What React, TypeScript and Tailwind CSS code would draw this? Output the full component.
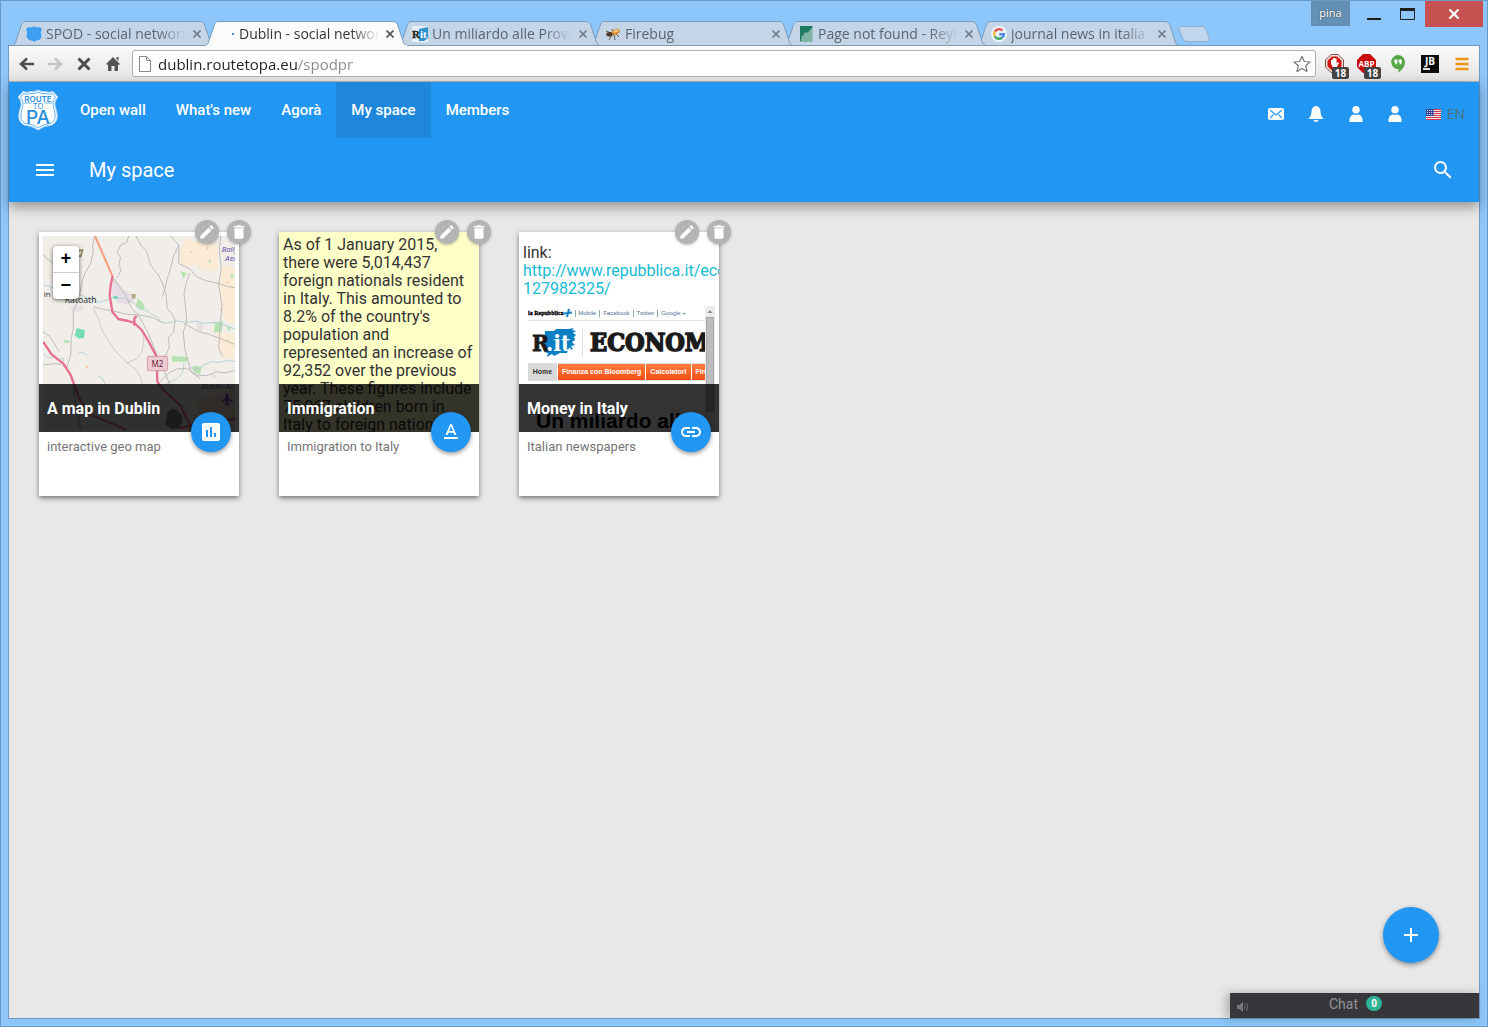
import { ReactNode } from "react";
import {
  MdAdd,
  MdAssessment,
  MdDelete,
  MdEdit,
  MdLink,
  MdMenu,
  MdSearch,
  MdTextFormat,
} from "react-icons/md";

/* ---------- Tab strip ---------- */

function ShieldFavicon() {
  return (
    <svg viewBox="0 0 16 16" className="size-4" aria-hidden="true">
      <path
        d="M2 1 Q5 2 8 .5 Q11 2 14 1 L16 3.5 Q14 6 15.3 9 Q16 13 12 14.3 Q9.5 14.5 8 16 Q6.5 14.5 4 14.3 Q0 13 .7 9 Q2 6 0 3.5Z"
        fill="#3f9ff3"
      />
    </svg>
  );
}

function LoadingFavicon() {
  return (
    <svg viewBox="0 0 16 16" className="size-4" aria-hidden="true">
      <rect x="13" y="7" width="2" height="2" fill="#4a84e8" />
    </svg>
  );
}

function RitFavicon() {
  return (
    <svg viewBox="0 0 16 16" className="size-4" aria-hidden="true">
      <rect width="16" height="16" fill="#e6eef6" />
      <path d="M7 3 L16 1 V12 L12 15 H7Z" fill="#2f93d0" />
      <g fontSize="11" fontWeight="700" fontFamily="Liberation Serif, serif">
        <text x="0" y="12" fill="#222" stroke="#222" strokeWidth=".4">R</text>
        <text x="8" y="12" fill="#fff">it</text>
      </g>
    </svg>
  );
}

function BugFavicon() {
  return (
    <svg viewBox="0 0 16 16" className="size-4" aria-hidden="true">
      <path d="M1 5 L6 7 M1 9 L6 8 M4 14 L7 9 M10 14 L9 8 M14 11 L10 7 M7 3 L8 6" stroke="#6b5c48" fill="none" />
      <ellipse cx="10.5" cy="6" rx="4.6" ry="2.7" transform="rotate(-22 10.5 6)" fill="#dc8f32" />
      <ellipse cx="11" cy="5" rx="3" ry="1" transform="rotate(-22 11 5)" fill="#f5cf8e" />
      <ellipse cx="4.5" cy="8.2" rx="3" ry="2.3" fill="#51382a" />
    </svg>
  );
}

function GreenFavicon() {
  return (
    <svg viewBox="0 0 16 16" className="size-4" aria-hidden="true">
      <rect x="2" width="12.5" height="16" fill="#7fb3a4" />
      <path d="M2 0 H14.5 V1 L12 4 L9 7 L7 6 L5 10 L4 9 L3 15 H2Z" fill="#1d7c60" />
    </svg>
  );
}

function GoogleFavicon() {
  return (
    <svg viewBox="0 0 16 16" className="size-4" aria-hidden="true">
      <circle cx="8" cy="8" r="8" fill="#edf3fa" />
      <g fill="none" strokeWidth="2.4">
        <path d="M11.500 4.600 A4.900 4.900 0 0 0 3.800 5.600" stroke="#e0584c" />
        <path d="M3.800 5.600 A4.900 4.900 0 0 0 3.800 10.400" stroke="#f2bd42" />
        <path d="M3.800 10.400 A4.900 4.900 0 0 0 11 11.800" stroke="#45a866" />
        <path d="M11 11.800 A4.900 4.900 0 0 0 12.900 8.200 H8.200" stroke="#5488e8" />
      </g>
    </svg>
  );
}

type Tab = { title: string; icon: ReactNode; layer: string; active?: boolean };

const tabs: Tab[] = [
  { title: "SPOD - social network", icon: <ShieldFavicon />, layer: "z-[6]" },
  { title: "Dublin - social network", icon: <LoadingFavicon />, layer: "z-10", active: true },
  { title: "Un miliardo alle Province", icon: <RitFavicon />, layer: "z-[5]" },
  { title: "Firebug", icon: <BugFavicon />, layer: "z-[4]" },
  { title: "Page not found - Reyk", icon: <GreenFavicon />, layer: "z-[3]" },
  { title: "journal news in italia", icon: <GoogleFavicon />, layer: "z-[2]" },
];

function BrowserTab({ tab }: { tab: Tab }) {
  return (
    <div className={`relative -ml-[10px] h-[25px] w-[203px] shrink-0 ${tab.layer}`}>
      <svg viewBox="0 0 203 25" className="absolute inset-0 size-full" aria-hidden="true">
        <path
          d="M0 24.5 C2 24.5 3 23 4 20 L9 5 C10 1.5 11 .5 14 .5 H187 C190 .5 192 1.5 193 5 L198 20 C199 23 200 24.5 203 24.5"
          fill={tab.active ? "#fbfbfb" : "#c4d5e8"}
          stroke="#7c9cbd"
        />
        {tab.active ? (
          <path d="M1 24.5 H202" stroke="#fbfbfb" />
        ) : (
          <path d="M0 24.5 H203" stroke="#8599b0" />
        )}
      </svg>
      <div className="relative flex h-full items-center pl-[14px]">
        {tab.icon}
        <span
          className={`ml-1 w-[140px] overflow-hidden whitespace-nowrap text-[14px] leading-6 [mask-image:linear-gradient(to_right,#000_112px,transparent_140px)] ${
            tab.active ? "text-[#333]" : "text-[#5a6573]"
          }`}
        >
          {tab.title}
        </span>
        <button aria-label={`Close ${tab.title}`} className="ml-[5px] flex size-3 items-center justify-center">
          <svg viewBox="0 0 8 8" className="size-2" aria-hidden="true">
            <path d="M.5 .5 L7.5 7.5 M7.5 .5 L.5 7.5" stroke={tab.active ? "#555" : "#74808e"} strokeWidth="1.7" />
          </svg>
        </button>
      </div>
    </div>
  );
}

function TitleBar() {
  return (
    <header className="flex h-11 justify-between">
      <div className="-mb-px flex items-end self-end pl-[14px]">
        {tabs.map((t) => (
          <BrowserTab key={t.title} tab={t} />
        ))}
        <button aria-label="New tab" className="mb-1 -ml-0.5 shrink-0">
          <svg viewBox="0 0 32 16" className="h-4 w-8" aria-hidden="true">
            <path d="M3 .5 H24 Q27 .5 28 3 L31 12 Q32 15.5 29 15.5 H9 Q6 15.5 5 13 L1 3 Q.3 .5 3 .5Z" fill="#c1d6ec" stroke="#8fb0d0" />
          </svg>
        </button>
      </div>
      <div className="-mr-[3px] flex items-start">
        <span className="flex h-[25px] w-[39px] items-center justify-center bg-[#6590b6] text-[11px] text-white [text-shadow:0_0_2px_#333]">
          pina
        </span>
        <button aria-label="Minimize" className="ml-4 flex h-[26px] w-4 items-center justify-center">
          <svg viewBox="0 0 16 26" className="h-[26px] w-4" aria-hidden="true">
            <path d="M1 18 H15" stroke="#1e1e1e" strokeWidth="2" />
          </svg>
        </button>
        <button aria-label="Maximize" className="ml-4 flex h-[26px] w-5 items-center justify-center">
          <svg viewBox="0 0 20 26" className="h-[26px] w-5" aria-hidden="true">
            <path d="M2.5 8 V18.5 H16.5 V8" fill="none" stroke="#1e1e1e" />
            <path d="M2 8.5 H17" stroke="#1e1e1e" strokeWidth="3" />
          </svg>
        </button>
        <button aria-label="Close window" className="ml-[7px] flex h-[26px] w-[58px] items-center justify-center bg-[#c75050]">
          <svg viewBox="0 0 12 10" className="h-2.5 w-3" aria-hidden="true">
            <path d="M1.5 .5 L10.5 9.5 M10.5 .5 L1.5 9.5" stroke="#fff" strokeWidth="2.2" />
          </svg>
        </button>
      </div>
    </header>
  );
}

/* ---------- Browser toolbar ---------- */

function CountBadge() {
  return (
    <>
      <rect x="7" y="13" width="17" height="12" rx="2" fill="#444" />
      <text x="15.5" y="23" textAnchor="middle" fontSize="10" fontWeight="700" fontFamily="Open Sans, sans-serif" fill="#fff">
        18
      </text>
    </>
  );
}

function BrowserToolbar() {
  return (
    <div className="flex h-9 items-center border-b border-[#b4b4b4] bg-linear-to-b from-[#fbfbfb] to-[#e4e4e4] pr-2.5 pl-2">
      <button aria-label="Back" className="flex size-5 items-center justify-center">
        <svg viewBox="0 0 16 14" className="h-3.5 w-4" aria-hidden="true">
          <path d="M15 7 H2 M8 1.5 L2 7 L8 12.5" fill="none" stroke="#4c4c4c" strokeWidth="2.5" />
        </svg>
      </button>
      <button aria-label="Forward" className="ml-2 flex size-5 items-center justify-center">
        <svg viewBox="0 0 16 14" className="h-3.5 w-4" aria-hidden="true">
          <path d="M1 7 H14 M8 1.5 L14 7 L8 12.5" fill="none" stroke="#c5c5c5" strokeWidth="2.5" />
        </svg>
      </button>
      <button aria-label="Stop" className="ml-[9px] flex size-5 items-center justify-center">
        <svg viewBox="0 0 14 14" className="size-3.5" aria-hidden="true">
          <path d="M1.5 1.5 L12.5 12.5 M12.5 1.5 L1.5 12.5" stroke="#4c4c4c" strokeWidth="3" />
        </svg>
      </button>
      <button aria-label="Home" className="ml-[9px] flex size-5 items-center justify-center">
        <svg viewBox="0 0 14 16" className="h-4 w-3.5" aria-hidden="true">
          <path d="M7 1 L14 8 L13 9 L12 8.3 V15 H8.5 V10 H5.5 V15 H2 V8.3 L1 9 L0 8Z M10.5 1 H12.5 V5 L10.5 3Z" fill="#555" />
        </svg>
      </button>
      <div className="ml-[9px] flex h-[27px] min-w-0 flex-1 items-center rounded-[3px] border border-[#b0b0b0] bg-white px-1">
        <svg viewBox="0 0 12 16" className="ml-0.5 h-4 w-3 shrink-0" aria-hidden="true">
          <path d="M.5 .5 H7.5 L11.5 4.5 V15.5 H.5Z M7.5 .5 V4.5 H11.5" fill="#fff" stroke="#868686" />
        </svg>
        <input
          aria-label="Address"
          defaultValue="dublin.routetopa.eu/spodpr"
          className="ml-[7px] min-w-0 flex-1 bg-[linear-gradient(to_right,#222_139px,#888_139px)] bg-clip-text text-[15px] leading-6 text-transparent outline-none"
        />
        <button aria-label="Bookmark">
          <svg viewBox="0 0 18 18" className="size-[18px]" aria-hidden="true">
            <path d="M9 1.2 L11.3 6.5 L17 7 L12.7 10.8 L14 16.5 L9 13.5 L4 16.5 L5.3 10.8 L1 7 L6.7 6.5Z" fill="#fff" stroke="#777" strokeWidth="1.2" strokeLinejoin="round" />
          </svg>
        </button>
      </div>
      <div className="ml-[9px] flex shrink-0 items-center">
        <button aria-label="Hand blocker, 18 blocked">
          <svg viewBox="0 -6 24 32" className="h-8 w-6" aria-hidden="true">
            <path d="M6 .5 H13 L18.5 6 V13 L13 18.5 H6 L.5 13 V6Z" fill="#e9e4e2" stroke="#8a4b47" />
            <path d="M6.8 2.5 H12.2 L16.5 6.8 V12.2 L12.2 16.5 H6.8 L2.5 12.2 V6.8Z" fill="#d2140e" />
            <path d="M6 10 V6 H7.3 V9 V4.500 H8.700 V8.500 V4 H10.200 V8.500 V4.500 H11.600 V9.500 L13 8 L14 9 L11.500 13.500 H8 Z" fill="#fff" />
            <CountBadge />
          </svg>
        </button>
        <button aria-label="Ad blocker, 18 blocked" className="ml-2">
          <svg viewBox="0 -6 24 32" className="h-8 w-6" aria-hidden="true">
            <path d="M6 0 H13 L19 6 V13 L13 19 H6 L0 13 V6Z" fill="#c90a0a" />
            <text x="9.5" y="13" textAnchor="middle" fontSize="8" fontWeight="700" fontFamily="Open Sans, sans-serif" fill="#fff">
              ABP
            </text>
            <CountBadge />
          </svg>
        </button>
        <button aria-label="Hangouts" className="ml-2.5">
          <svg viewBox="0 0 14 18" className="h-[18px] w-3.5" aria-hidden="true">
            <path d="M7 0 A7 7 0 0 1 14 7 C14 11 11 15 7.5 17.5 V14 A7 7 0 0 1 7 0Z" fill="#55a845" />
            <path d="M3.300 4.500 H6.300 V7.500 Q6.300 9.500 4.300 9.800 V7.500 H3.300Z M7.700 4.500 H10.700 V7.500 Q10.700 9.500 8.700 9.800 V7.500 H7.700Z" fill="#fff" />
          </svg>
        </button>
        <button aria-label="JetBrains" className="ml-4">
          <svg viewBox="0 0 18 18" className="size-[18px]" aria-hidden="true">
            <rect width="18" height="18" fill="#0c0c0c" />
            <text x="9" y="10" textAnchor="middle" fontSize="10" fontWeight="700" fontFamily="Open Sans, sans-serif" fill="#fff">
              JB
            </text>
            <rect x="2" y="13" width="7" height="2" fill="#ddd" />
          </svg>
        </button>
        <button aria-label="Browser menu" className="ml-4">
          <svg viewBox="0 0 14 14" className="size-3.5" aria-hidden="true">
            <path d="M.5 2 H13.5 M.5 7 H13.5 M.5 12 H13.5" stroke="#ee9514" strokeWidth="2.6" />
          </svg>
        </button>
      </div>
    </div>
  );
}

/* ---------- Site header ---------- */

function Logo() {
  return (
    <svg viewBox="0 0 42 42" className="size-[42px]" role="img" aria-label="Route to PA">
      <path
        d="M6 2.5 Q10 4 14 2.500 Q18 3 21 1 Q24 3 28 2.500 Q32 4 36 2.500 L41 8 Q36 13 39 20 Q43 32 35 36 Q26 37 21 41 Q16 37 7 36 Q-1 32 3 20 Q6 13 1 8Z"
        fill="#fff"
        stroke="#a5d3fa"
      />
      <path
        d="M6.500 4.500 Q10 6 14 4.500 Q18 5 21 3 Q24 5 28 4.500 Q32 6 35.500 4.500 L38.500 8 Q34.500 13 37 20 Q40.500 31 34 34.300 Q26 35 21 38.800 Q16 35 8 34.300 Q1.500 31 5 20 Q7.500 13 3.500 8Z"
        fill="none"
        stroke="#6bb7f7"
      />
      <path d="M6.5 14 H14.500 M27.500 14 H35.500" stroke="#6bb7f7" />
      <g fill="#2b8fdd" textAnchor="middle" fontFamily="Inter, sans-serif">
        <text x="21" y="12.500" fontSize="8" fontWeight="600">ROUTE</text>
        <text x="21" y="20" fontSize="7.500">TO</text>
        <text x="21" y="35" fontSize="19" fontWeight="500">PA</text>
      </g>
    </svg>
  );
}

function MailIcon() {
  return (
    <svg viewBox="0 0 16 12" className="h-3 w-4" aria-hidden="true">
      <rect width="16" height="12" rx="2" fill="#fff" />
      <path d="M2 2 L8 7 L14 2 M2 10 L5.5 6.5 M14 10 L10.5 6.5" fill="none" stroke="#2196f3" strokeWidth="1.1" />
    </svg>
  );
}

function BellIcon() {
  return (
    <svg viewBox="0 0 16 16" className="size-4" aria-hidden="true">
      <path d="M8 0 Q12.5 .5 12.5 6 Q12.5 10 15.3 12.5 V13 H.7 V12.5 Q3.5 10 3.5 6 Q3.5 .5 8 0Z M5.5 14 H10.5 Q10 16 8 16 Q6 16 5.5 14Z" fill="#fff" />
    </svg>
  );
}

function PersonIcon() {
  return (
    <svg viewBox="0 0 14 16" className="h-4 w-3.5" aria-hidden="true">
      <ellipse cx="7" cy="3.8" rx="3.7" ry="3.8" fill="#fff" />
      <path d="M.5 16 V13.5 Q1 8.8 5 8.5 Q7 9.3 9 8.5 Q13 8.8 13.5 13.5 V16Z" fill="#fff" />
    </svg>
  );
}

function FlagIcon() {
  return (
    <svg viewBox="0 0 15 11" className="h-[11px] w-[15px]" aria-hidden="true">
      <rect width="15" height="11" fill="#f6e9ea" />
      <path d="M0 .5 H15 M0 2.5 H15 M0 4.5 H15 M0 6.5 H15 M0 8.5 H15 M0 10.5 H15" stroke="#d3344a" />
      <rect width="8" height="7" fill="#39459b" />
      <path d="M1 1.5 H8 M1 3.5 H8 M1 5.5 H8" stroke="#c5c9e8" strokeDasharray="1 1" />
    </svg>
  );
}

const navItems = ["Open wall", "What's new", "Agorà", "My space", "Members"];

function SiteHeader() {
  return (
    <div className="relative z-10 bg-[#2196f3] font-[Roboto,sans-serif] text-white shadow-[0_5px_12px_rgba(0,0,0,0.38)]">
      <div className="flex h-14 items-center justify-between">
        <div className="flex items-center">
          <a href="#home" className="ml-2 w-12">
            <Logo />
          </a>
          <nav className="flex">
            {navItems.map((item) => (
              <a
                key={item}
                href={`#${item}`}
                className={`px-[15px] text-[15px] leading-[56px] font-medium ${item === "My space" ? "bg-[#1e87db]" : ""}`}
              >
                {item}
              </a>
            ))}
          </nav>
        </div>
        <div className="flex items-center pt-2 pr-[14px]">
          <button aria-label="Messages"><MailIcon /></button>
          <button aria-label="Notifications" className="ml-6"><BellIcon /></button>
          <button aria-label="Friends" className="ml-[25px]"><PersonIcon /></button>
          <button aria-label="Profile" className="ml-[25px]"><PersonIcon /></button>
          <button className="ml-6 flex items-center gap-1.5 font-['Open_Sans',sans-serif] text-[14px] leading-5 text-[#50707f]">
            <FlagIcon />
            EN
          </button>
        </div>
      </div>
      <div className="flex h-16 items-center px-6">
        <button aria-label="Menu"><MdMenu size={24} /></button>
        <h1 className="ml-8 flex-1 text-[20px] leading-6">My space</h1>
        <button aria-label="Search"><MdSearch size={24} /></button>
      </div>
    </div>
  );
}

/* ---------- Card previews ---------- */

function MapPreview() {
  return (
    <div className="relative h-full bg-white px-1 pt-1 pb-0.5">
      <svg viewBox="39 63 576 582" className="size-full" role="img" aria-label="Map of the area around Ratoath">
        <rect x="39" y="63" width="576" height="582" fill="#f1eeea" />
        <g fill="#fbead6">
          <path d="M470 72 L500 80 L530 75 L562 85 L566 160 L540 172 L515 165 L495 145 L470 160 L450 150 L446 110Z" />
          <path d="M575 150 L615 160 V320 L595 325 L572 290 L570 210Z" />
          <path d="M560 350 L615 360 V430 L580 432 L562 400Z" />
        </g>
        <path d="M500 555 L615 520 V645 H500 Z" fill="#e8dccb" />
        <path d="M412 592 L425 582 L440 584 L455 600 L458 620 L448 640 L425 642 L405 630Z" fill="#858580" />
        <path d="M248 190 L268 205 L280 225 L318 245 L312 258 L290 268 L262 262 L246 235Z" fill="#e6dce4" />
        <path d="M500 320 L522 330 L515 350 L500 345Z M120 275 L160 270 L155 290 L130 290Z M540 475 L560 480 L552 492Z" fill="#e4e0e2" />
        <g fill="#b7e1b0">
          <path d="M322 250 L338 262 L345 280 L336 284 L318 275Z" />
          <path d="M425 422 L472 426 L470 440 L426 440Z" />
          <path d="M488 452 L515 455 L510 478 L490 470Z" />
          <path d="M555 322 L580 318 L575 350 L552 352Z" />
          <path d="M589 332 L604 336 L596 350Z" />
          <path d="M600 590 L615 588 V620 L600 615Z M533 137 L543 134 L541 147Z M452 168 L470 175 L460 192Z M600 175 L612 182 L606 192Z M102 375 L118 376 L118 384 L103 383Z" />
        </g>
        <path d="M140 339 L165 346 L162 368 L148 371 L134 362Z" fill="#74dcb6" />
        <path d="M250 244 L264 245 L262 252 L250 250Z" fill="#27cfa0" />
        <path d="M303 237 H317 V248 L308 252Z" fill="#b3ab88" />
        <path d="M500 80 h8 v4 h-8Z M530 95 h5 v9 h-5Z M480 110 h6 v4 h-6Z M590 200 h7 v5 h-7Z M570 280 h6 v6 h-6Z M168 453 h6 v6 h-6Z M590 375 h6 v4 h-6Z" fill="#f3c6a8" />
        <g fill="none" stroke="#b5d2d8" strokeWidth="3" strokeLinejoin="round">
          <path d="M39 210 L60 214 L80 226 M150 240 L170 248 L205 262 L230 256 L250 248 L290 252 L312 264 L330 284 L350 286 L365 298 L380 304 L392 320 L410 325 L440 318 L470 322 L500 318 L520 325 L560 322 L585 330 L615 342" />
          <path d="M615 440 L590 436 L570 442 L545 440 L520 450 L505 462 L480 458" />
          <path d="M39 415 L55 428 L70 426 L85 434 L100 430 L100 455 L112 462 M146 412 L158 412 L172 422 M205 485 L218 490 L222 500 L235 525 M462 445 L460 465 L450 482 L435 495 L410 505" />
        </g>
        <g fill="none" stroke="#bdbdbb" strokeWidth="3" strokeLinejoin="round">
          <path d="M194 63 L188 90 L190 110 L182 145 L165 175 L155 205 L150 235 L140 265 L130 285 L130 340 L124 370 L122 420 L110 460" />
          <path d="M318 63 L332 90 L350 110 L362 150 L385 180 L398 205 L408 240 L412 280 L425 295 L436 316 L430 352 L415 368 L418 395 L408 420 L390 445" />
          <path d="M447 90 L430 125 L422 160 L412 190 L405 220 L397 245" />
          <path d="M422 63 L447 92 L446 145 L480 162 L500 185 L530 198 L570 206 L590 214 L615 218" />
          <path d="M478 175 L470 200 L462 235 L468 290 L470 320 L460 350 L464 400 L475 440 L482 470 L510 490" />
          <path d="M572 63 L568 110 L574 160 L566 210 L576 270 L570 340 L566 400 L578 425" />
          <path d="M252 192 L285 238 L305 280 L325 300 L355 355 L385 430 L408 480 L428 530" />
          <path d="M190 275 L215 282 L250 288 L290 298 L330 300 L370 308 L400 325" />
          <path d="M39 120 L68 145 M39 350 L60 365 L88 410 M39 450 L70 446 L95 448" />
          <path d="M296 63 L290 82 L272 90 L262 112 L272 128 L266 150 L274 165 L260 190" />
          <path d="M390 500 L415 475 L440 462 L470 460 L500 480 L530 482 L560 470 L585 474 L615 466 M462 325 L505 350 L530 356 L570 370 L615 388" />
        </g>
        <g fill="none" stroke="#cfccc8" strokeWidth="3">
          <path d="M190 280 L205 310 L218 350 L240 385 L262 415 L290 442 L318 462 L330 485 L338 510" />
          <path d="M290 445 L322 430 L336 410 L342 375 L336 345" />
          <path d="M130 520 L152 645" stroke="#9c9c98" />
        </g>
        <path d="M195 63 L248 185" fill="none" stroke="#f99b78" strokeWidth="6" />
        <g fill="none" stroke="#e8708e" strokeWidth="7" strokeLinejoin="round">
          <path d="M248 183 L242 210 L239 240 L247 290 L265 312 L295 318 L313 324 L335 345 L355 378 L380 425 L382 500 L400 525 L450 570 L470 610 L485 640" />
          <path d="M313 332 V310 L320 303" />
          <path d="M39 380 L65 418 L100 446 L122 480 L133 510 L150 555 L185 600 L245 625 L290 645" />
          <path d="M450 640 L500 625 L560 618 L615 612" />
        </g>
        <rect x="352" y="424" width="61" height="43" rx="4" fill="#eccbd2" stroke="#d79aa8" strokeWidth="3" />
        <g fontFamily="Noto Sans, sans-serif">
          <text x="382" y="455" textAnchor="middle" fontSize="24" fill="#6b2337">M2</text>
          <text x="104" y="264" fontSize="26" fill="#333">Ratoath</text>
          <text x="41" y="247" fontSize="23" fill="#333">in</text>
          <g fill="#6a55a8" fontStyle="italic" fontSize="23">
            <text x="575" y="112">Bally</text>
            <text x="586" y="139">Aero</text>
            <text x="513" y="522">Dublin Airport</text>
          </g>
        </g>
        <path d="M591 534 L595 540 V549 L609 558 V562 L595 558 V566 L600 571 H582 L587 566 V558 L573 562 V558 L587 549 V540Z" fill="#6a55a8" />
        <path d="M140 108 L158 105 L152 125 L146 122" fill="none" stroke="#8d7a48" strokeWidth="4" />
      </svg>
      <div className="absolute top-[14px] left-[14px] flex w-[26px] flex-col rounded bg-white font-['Liberation_Mono',monospace] text-[18px] leading-5 font-bold text-black shadow-[0_1px_4px_rgba(0,0,0,0.6)]">
        <button aria-label="Zoom in" className="flex h-[27px] items-center justify-center border-b border-[#ccc]">+</button>
        <button aria-label="Zoom out" className="flex h-[26px] items-center justify-center">−</button>
      </div>
    </div>
  );
}

function NotePreview() {
  return (
    <p className="h-full overflow-hidden bg-[#ffffc8] px-1 pt-1 text-[16px] leading-[18px] text-[#333]">
      As of 1 January 2015, there were 5,014,437 foreign nationals resident in Italy. This amounted to 8.2% of the
      country's population and represented an increase of 92,352 over the previous year. These figures include 75,067
      children born in Italy to foreign nationals
    </p>
  );
}

const siteLinks = ["Mobile", "Facebook", "Twitter", "Google +"];
const sections = ["Finanza con Bloomberg", "Calcolatori", "Finanza"];

function NewsPreview() {
  return (
    <div className="h-full overflow-hidden bg-white pt-3 pl-1">
      <p className="text-[16px] leading-[18px] whitespace-nowrap text-[#333]">
        link:
        <br />
        <a href="#article" className="text-[#15bcd4]">
          http://www.repubblica.it/economia
          <br />
          127982325/
        </a>
      </p>
      <div className="mt-2 mr-1 ml-[5px] flex h-32 font-['Liberation_Sans',Arial,sans-serif]">
        <div className="min-w-0 flex-1 overflow-hidden whitespace-nowrap">
          <div className="flex h-[15px] items-center border-b border-[#e3e3e3] text-[6px] leading-[7px] text-[#4d6f96]">
            <span className="font-['Liberation_Serif',serif] font-bold text-black [-webkit-text-stroke:0.3px_#000]">la Repubblica</span>
            <svg viewBox="0 0 8 10" className="h-2.5 w-2" aria-hidden="true">
              <path d="M5 1 L3 9 M0 5.5 L8 4.5" stroke="#1681c2" strokeWidth="2" />
            </svg>
            {siteLinks.map((link) => (
              <span key={link} className="ml-[3px] border-l border-[#8aa] pl-[3px]">{link}</span>
            ))}
          </div>
          <div className="flex h-[42px] items-center">
            <svg viewBox="0 0 44 30" className="ml-1 h-[30px] w-11 shrink-0" role="img" aria-label="R.it">
              <path
                d="M13 4 L22 4 L24 2 L36 2 L42 1 L40 3 L44 4 L41 6 L44 8 L42 10 L43 13 L40 15 L43 18 L39 19 L41 22 L36 23 L35 26 L28 26 L22 29 L20 27 L15 30 L16 26 L12 25 L14 22 L12 20Z"
                fill="#0a7fc4"
              />
              <g fontFamily="DejaVu Serif Condensed, DejaVu Serif, serif" fontWeight="700" fontSize="23">
                <text x="0" y="24" fill="#1b1b1b" stroke="#1b1b1b" strokeWidth=".8">R</text>
                <text x="14" y="24" fill="#fff">.it</text>
              </g>
            </svg>
            <span className="ml-1.5 h-[27px] w-px shrink-0 bg-[#ddd]" />
            <span className="ml-[7px] font-['DejaVu_Serif_Condensed','DejaVu_Serif',serif] text-[25px] leading-[27px] font-bold text-[#1b1b1b] [-webkit-text-stroke:1.5px_#1b1b1b]">
              ECONOMIA
            </span>
          </div>
          <div className="flex h-[18px] border-y border-[#ddd] text-[7px] leading-4 font-bold text-white">
            <span className="w-[29px] shrink-0 bg-[#d9d9d9] text-center text-[#333]">Home</span>
            {sections.map((section) => (
              <span key={section} className="ml-px shrink-0 bg-linear-to-b from-[#ff7a3c] to-[#f04e10] px-1">
                {section}
              </span>
            ))}
          </div>
          <h2 className="mt-7 ml-2 text-[21px] leading-6 font-bold text-black">Un miliardo alle</h2>
        </div>
        <div className="flex w-2.5 flex-col items-center bg-[#ececec]">
          <svg viewBox="0 0 10 11" className="h-[11px] w-2.5 shrink-0" aria-hidden="true">
            <path d="M5 4 L7.5 7 H2.5Z" fill="#888" />
          </svg>
          <div className="h-[95px] w-2 shrink-0 border border-[#a6a6a6] bg-[#bcbcbc]" />
        </div>
      </div>
    </div>
  );
}

/* ---------- Cards ---------- */

type CardProps = { title: string; description: string; icon: ReactNode; preview: ReactNode };

const roundTool =
  "flex size-6 items-center justify-center rounded-full bg-[#b4b4b4] text-white shadow-[0_1px_3px_rgba(0,0,0,0.25)]";

function Card({ title, description, icon, preview }: CardProps) {
  return (
    <article className="relative flex h-[264px] w-[200px] flex-col bg-white shadow-[0_2px_5px_rgba(0,0,0,0.5)]">
      <div className="relative h-[200px] overflow-hidden">
        {preview}
        <h2 className="absolute inset-x-0 bottom-0 flex h-12 items-center bg-black/80 px-2 pt-0.5 text-[16px] font-bold text-white">
          {title}
        </h2>
      </div>
      <p className="px-2 pt-1.5 text-[13px] leading-[18px] text-[#757575]">{description}</p>
      <button
        aria-label={`Open ${title}`}
        className="absolute top-[180px] right-2 flex size-10 items-center justify-center rounded-full bg-[#2196f3] text-white shadow-[0_2px_4px_rgba(0,0,0,0.4)]"
      >
        {icon}
      </button>
      <div className="absolute -top-3 -right-3 flex gap-2">
        <button aria-label={`Edit ${title}`} className={roundTool}><MdEdit size={18} /></button>
        <button aria-label={`Delete ${title}`} className={roundTool}><MdDelete size={18} /></button>
      </div>
    </article>
  );
}

function ChatBar() {
  return (
    <aside className="absolute right-0 bottom-0 flex h-[25px] w-[249px] items-center bg-[#37363b] shadow-[-4px_0_10px_rgba(0,0,0,0.25)]">
      <button aria-label="Mute chat" className="ml-1.5 pt-0.5">
        <svg viewBox="0 0 14 12" className="h-3 w-3.5" aria-hidden="true">
          <path d="M1 4 H3.5 L7 1 V11 L3.5 8 H1Z" fill="#77777a" />
          <path d="M8.5 3.5 Q10 6 8.5 8.5 M10.5 2 Q13 6 10.5 10" fill="none" stroke="#6a6a6e" />
        </svg>
      </button>
      <button className="flex flex-1 items-center gap-2 pr-5 pb-1 pl-[79px] text-[14px] leading-5 text-[#949499]">
        Chat
        <span className="flex h-[15px] w-4 items-center justify-center rounded-full bg-[#2fb398] text-[10px] font-bold text-white">
          0
        </span>
      </button>
    </aside>
  );
}

export default function App() {
  return (
    <div className="flex min-h-screen flex-col border border-[#6b99c6] bg-[#8cc6fa] px-[7px] pb-[7px] font-['Open_Sans',sans-serif]">
      <TitleBar />
      <div className="flex flex-1 flex-col border border-[#6f98c2] bg-white">
        <BrowserToolbar />
        <div className="relative flex flex-1 flex-col bg-[#e8e8e8] font-[Roboto,sans-serif]">
          <SiteHeader />
          <main className="flex flex-1 flex-wrap content-start gap-10 p-[30px]">
            <Card
              title="A map in Dublin"
              description="interactive geo map"
              icon={<MdAssessment size={24} />}
              preview={<MapPreview />}
            />
            <Card
              title="Immigration"
              description="Immigration to Italy"
              icon={<MdTextFormat size={24} />}
              preview={<NotePreview />}
            />
            <Card
              title="Money in Italy"
              description="Italian newspapers"
              icon={<MdLink size={24} />}
              preview={<NewsPreview />}
            />
          </main>
          <button
            aria-label="Add"
            className="absolute right-10 bottom-[55px] flex size-14 items-center justify-center rounded-full bg-[#2196f3] text-white shadow-[0_2px_5px_rgba(0,0,0,0.4)]"
          >
            <MdAdd size={24} />
          </button>
          <ChatBar />
        </div>
      </div>
    </div>
  );
}
